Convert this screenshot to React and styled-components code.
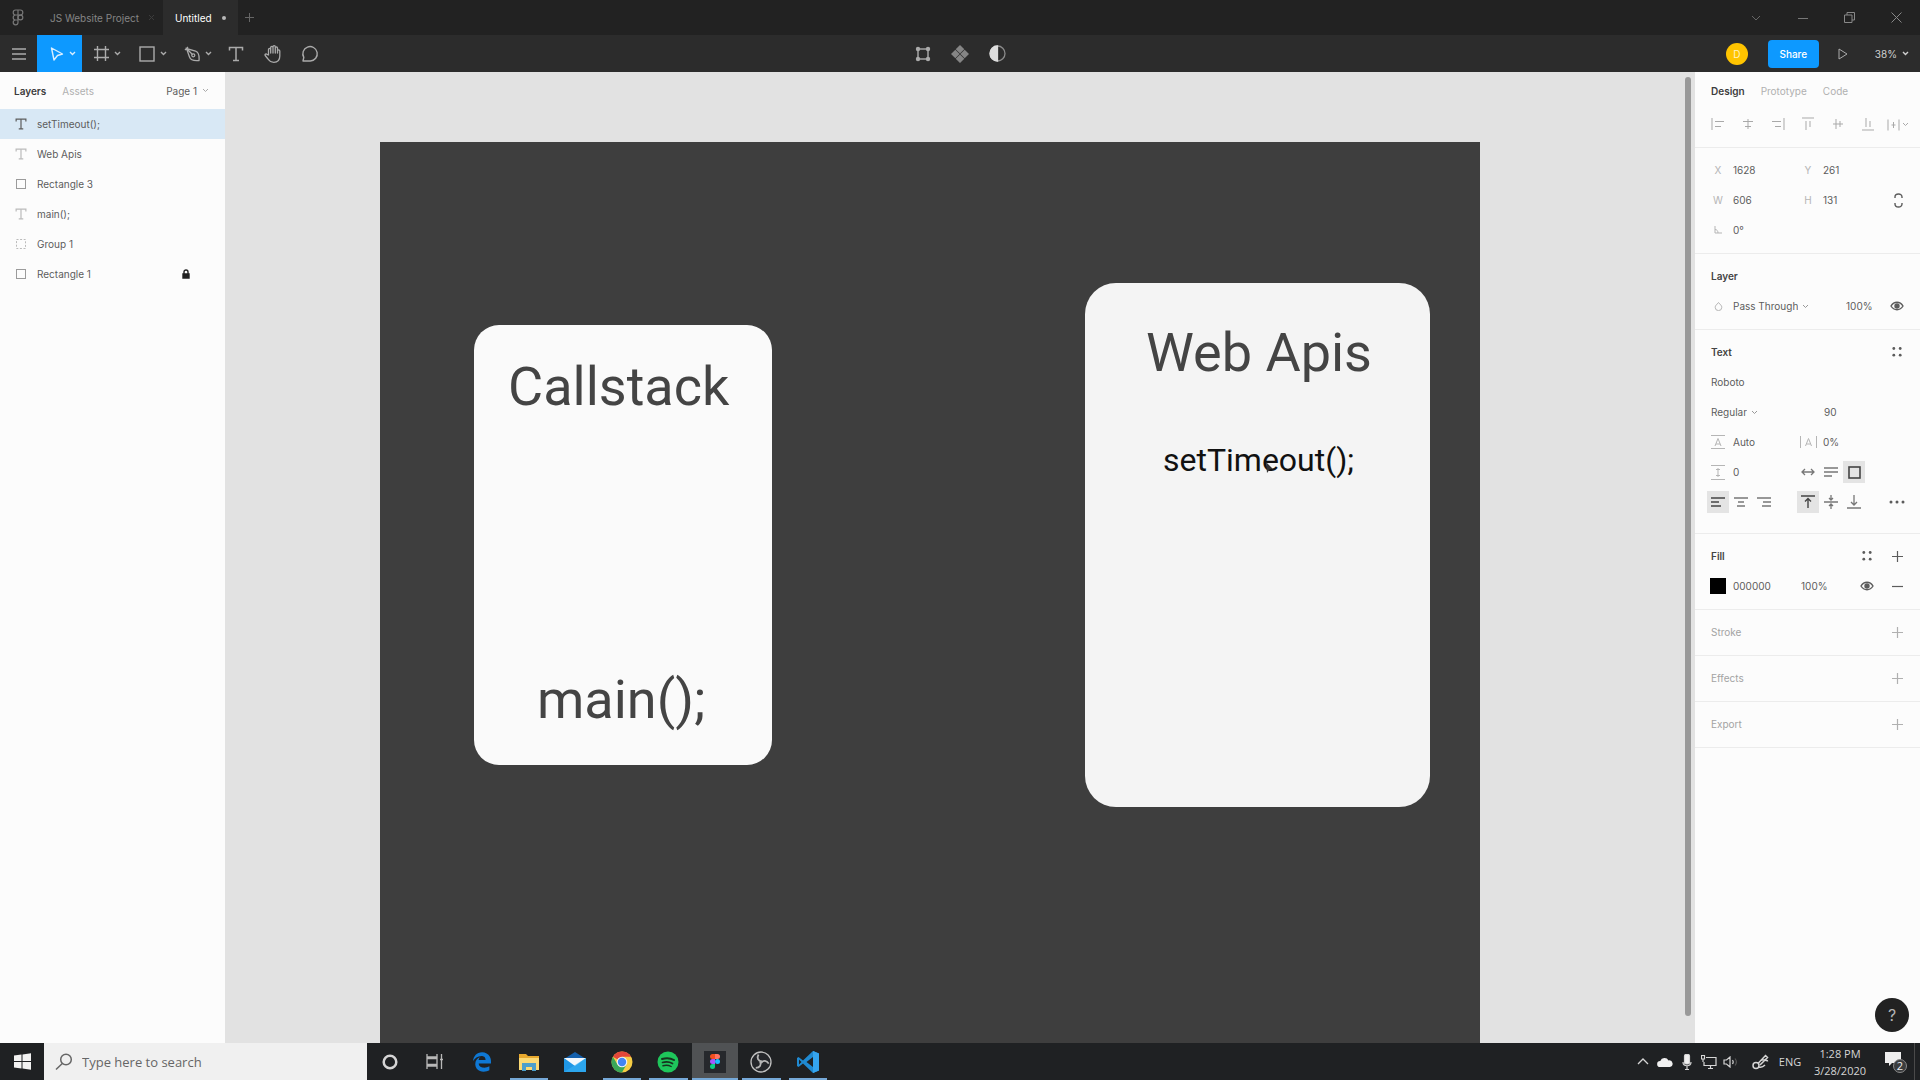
import React from "react";
import styled, { createGlobalStyle, css } from "styled-components";
import { FaEdgeLegacy } from "react-icons/fa";

const ui = `Inter, "Open Sans", sans-serif`;
const system = `"Open Sans", "Noto Sans", sans-serif`;

const Global = createGlobalStyle`
  * { box-sizing: border-box; }
  body { margin: 0; background: #e2e2e2; }
  button, input, select { font: inherit; color: inherit; margin: 0; }
  svg { display: block; flex: none; }
`;

const bare = css`
  border: 0;
  padding: 0;
  background: none;
  display: flex;
  align-items: center;
  justify-content: center;
`;

const Screen = styled.div`
  height: 100vh;
  display: flex;
  flex-direction: column;
  overflow: hidden;
  font: 400 10px/16px ${ui};
  color: #5c5c5c;
`;

/* ---------- title bar ---------- */
const TitleBar = styled.header`
  display: flex;
  height: 35px;
  flex: none;
  background: #222;
  color: #8a8a8a;
`;
const HomeButton = styled.button`
  ${bare}
  width: 36px;
`;
const FileTab = styled.button`
  ${bare}
  gap: 10px;
  padding: 0 ${(p) => (p.$active ? 12 : 9)}px 0 ${(p) => (p.$active ? 12 : 14)}px;
  background: ${(p) => (p.$active ? "#2c2c2c" : "transparent")};
  color: ${(p) => (p.$active ? "#fff" : "#858585")};
`;
const NewTab = styled.button`
  ${bare}
  width: 24px;
`;
const WindowButtons = styled.div`
  display: flex;
  margin-left: auto;
`;
const WindowButton = styled.button`
  ${bare}
  width: 47px;
`;

/* ---------- toolbar ---------- */
const Toolbar = styled.div`
  display: grid;
  grid-template-columns: 1fr auto 1fr;
  height: 37px;
  flex: none;
  background: #2c2c2c;
  color: #ababab;
`;
const ToolGroup = styled.div`
  display: flex;
  justify-content: ${(p) => (p.$end ? "flex-end" : "flex-start")};
  align-items: ${(p) => (p.$end ? "center" : "stretch")};
`;
const Tool = styled.button`
  ${bare}
  width: ${(p) => (p.$menu ? 45 : 37)}px;
  gap: 5px;
  padding-left: ${(p) => (p.$menu ? 6 : 0)}px;
  background: ${(p) => (p.$active ? "#0d99ff" : "transparent")};
  color: ${(p) => (p.$active ? "#d9eeff" : "inherit")};
`;
const Avatar = styled.button`
  ${bare}
  width: 22px;
  height: 22px;
  border-radius: 50%;
  background: #ffc400;
  color: #fff3c4;
  margin-right: 20px;
`;
const Share = styled.button`
  ${bare}
  width: 51px;
  height: 28px;
  border-radius: 4px;
  background: #0d99ff;
  color: #fff;
  font-weight: 500;
`;
const Play = styled.button`
  ${bare}
  width: 56px;
  height: 28px;
  padding-right: 8px;
`;
const ZoomButton = styled.button`
  ${bare}
  gap: 5px;
  margin-right: 11px;
  color: #d0d0d0;
`;

/* ---------- workspace ---------- */
const Workspace = styled.main`
  display: flex;
  flex: 1;
  min-height: 0;
`;
const LeftPanel = styled.aside`
  width: 225px;
  flex: none;
  background: #fcfcfc;
`;
const PanelTabs = styled.div`
  display: flex;
  align-items: center;
  height: 37px;
  gap: 16px;
  padding: 0 16px 0 ${(p) => (p.$left ? 14 : 16)}px;
`;
const PanelTab = styled.button`
  ${bare}
  font-weight: ${(p) => (p.$active ? 600 : 400)};
  color: ${(p) => (p.$active ? "#3c3c3c" : "#b0b0b0")};
`;
const PageButton = styled.button`
  ${bare}
  gap: 5px;
  margin-left: auto;
`;
const LayerList = styled.ul`
  list-style: none;
  margin: 0;
  padding: 0;
`;
const LayerRow = styled.li`
  display: flex;
  align-items: center;
  height: 30px;
  padding: 0 35px 0 15px;
  background: ${(p) => (p.$selected ? "#d8e8f5" : "transparent")};
`;
const LayerName = styled.button`
  ${bare}
  gap: 10px;
  flex: 1;
  justify-content: flex-start;
  & > svg { opacity: ${(p) => p.$dim}; }
`;

const Canvas = styled.section`
  position: relative;
  flex: 1;
  min-width: 0;
  overflow: hidden;
  background: #e2e2e2;
`;
const Artboard = styled.div`
  position: absolute;
  left: 155px;
  top: 70px;
  bottom: 0;
  width: 1100px;
  background: #3e3e3e;
`;
const Shape = styled.div`
  position: absolute;
  left: ${(p) => p.$x}px;
  top: ${(p) => p.$y}px;
  width: ${(p) => p.$w}px;
  height: ${(p) => p.$h}px;
  border-radius: ${(p) => p.$r}px;
  background: ${(p) => p.$fill};
`;
const CanvasText = styled.div`
  position: absolute;
  left: ${(p) => p.$x}px;
  top: ${(p) => p.$y}px;
  font: 400 ${(p) => p.$size}px/64px Roboto, sans-serif;
  color: ${(p) => p.$color};
  white-space: nowrap;
`;
const Pointer = styled.svg`
  position: absolute;
  left: 886px;
  top: 320px;
`;
const Scrollbar = styled.div`
  position: absolute;
  right: 4px;
  top: 5px;
  bottom: 27px;
  width: 6px;
  border-radius: 3px;
  background: #999;
`;

/* ---------- properties ---------- */
const RightPanel = styled.aside`
  position: relative;
  width: 225px;
  flex: none;
  background: #fcfcfc;
`;
const Section = styled.section`
  padding: ${(p) => (p.$first ? 0 : 7)}px 0 ${(p) => (p.$tall ? 16 : 8)}px;
  border-bottom: 1px solid #ececec;
`;
const AlignRow = styled.div`
  display: flex;
  height: 30px;
  padding-left: 8px;
  color: #a9a9a9;
`;
const IconButton = styled.button`
  ${bare}
  width: 30px;
  height: 30px;
  gap: 2px;
  color: ${(p) => p.$color || "inherit"};
`;
const PropRow = styled.div`
  display: grid;
  grid-template-columns: 90px 90px 29px;
  align-items: center;
  height: 30px;
  padding-left: 8px;
`;
const FieldLabel = styled.label`
  display: flex;
  align-items: center;
`;
const FieldMark = styled.span`
  display: flex;
  justify-content: center;
  width: 30px;
  flex: none;
  color: #b5b5b5;
`;
const Value = styled.input`
  width: ${(p) => p.$w || 56}px;
  height: 20px;
  border: 0;
  padding: 0;
  outline: 0;
  background: none;
`;
const TitleRow = styled.div`
  display: flex;
  align-items: center;
  height: 30px;
  padding: 0 8px 0 16px;
`;
const Title = styled.h2`
  flex: 1;
  margin: 0;
  font-size: 10px;
  line-height: 16px;
  font-weight: ${(p) => (p.$empty ? 400 : 600)};
  color: ${(p) => (p.$empty ? "#a3a3a3" : "#444")};
`;
const FlexRow = styled.div`
  display: flex;
  align-items: center;
  height: 30px;
  padding: 0 8px 0 ${(p) => p.$pad || 8}px;
`;
const Select = styled.select`
  appearance: none;
  border: 0;
  padding: 0;
  margin-right: 4px;
  outline: 0;
  background: none;
  field-sizing: content;
`;
const Fixed = styled.div`
  display: flex;
  align-items: center;
  width: ${(p) => p.$w}px;
`;
const Toggles = styled.div`
  display: flex;
  gap: 1px;
`;
const Toggle = styled.button`
  ${bare}
  width: 22px;
  height: 22px;
  background: ${(p) => (p.$on ? "#e4e4e4" : "transparent")};
  color: ${(p) => (p.$on ? "#444" : "#777")};
`;
const Swatch = styled.button`
  width: 16px;
  height: 16px;
  border: 0;
  padding: 0;
  margin-right: 7px;
  background: #000;
`;
const Help = styled.button`
  ${bare}
  position: absolute;
  right: 11px;
  bottom: 11px;
  width: 34px;
  height: 34px;
  border-radius: 50%;
  background: #222;
  color: #b4b4b4;
  font-size: 16px;
`;

/* ---------- taskbar ---------- */
const Taskbar = styled.footer`
  display: flex;
  height: 37px;
  flex: none;
  background: #1f2123;
  color: #d5d5d5;
  font-family: ${system};
`;
const TaskButton = styled.button`
  ${bare}
  width: ${(p) => p.$w || 45}px;
`;
const Search = styled.label`
  display: flex;
  align-items: center;
  gap: 9px;
  width: 323px;
  padding-left: 11px;
  background: #f0f0f0;
  color: #666;
`;
const SearchInput = styled.input`
  flex: 1;
  min-width: 0;
  border: 0;
  padding: 0;
  outline: 0;
  background: none;
  && { font-size: 13px; }
  &::placeholder { color: #666; opacity: 1; }
`;
const Apps = styled.div`
  display: flex;
  width: 372px;
  margin-left: 2px;
`;
const AppButton = styled.button`
  ${bare}
  position: relative;
  flex: 1;
  background: ${(p) => (p.$front ? "#505254" : "transparent")};
  &::after {
    content: "";
    position: absolute;
    left: ${(p) => (p.$front ? 0 : 4)}px;
    right: ${(p) => (p.$front ? 0 : 4)}px;
    bottom: 0;
    height: 2px;
    background: ${(p) => (p.$open ? "#76a9d8" : "transparent")};
  }
`;
const Tray = styled.div`
  display: flex;
  align-items: center;
  margin-left: auto;
`;
const TrayButton = styled.button`
  ${bare}
  width: ${(p) => p.$w || 22}px;
  height: 37px;
  font-size: 11px;
`;
const Clock = styled.button`
  ${bare}
  flex-direction: column;
  width: 76px;
  height: 37px;
  font-size: 11px;
  line-height: 17px;
`;
const ShowDesktop = styled.button`
  ${bare}
  width: 6px;
  height: 37px;
  border-left: 1px solid #4a4a4a;
`;

/* ---------- icons ---------- */
const Ico = ({ w = 16, h, s = 1, children, ...r }) => (
  <svg width={w} height={h || w} viewBox={`0 0 ${w} ${h || w}`} fill="none" stroke="currentColor" strokeWidth={s} aria-hidden="true" {...r}>
    {children}
  </svg>
);
const Chevron = ({ w = 7, ...r }) => (
  <Ico w={w} h={5} {...r}><path d={`M1 1l${w / 2 - 1} 2.5L${w - 1} 1`} /></Ico>
);
const TIcon = ({ w = 12 }) => (
  <Ico w={w} viewBox="0 0 16 16" s={w > 12 ? 1.5 : 1.6}><path d="M1.5 4.5V1.5h13v3M8 1.5v13M5 14.5h6" /></Ico>
);
const SquareIcon = ({ dash }) => (
  <Ico w={12}><rect x="1.5" y="1.5" width="9" height="9" strokeDasharray={dash ? "2 1.6" : "none"} /></Ico>
);
const Eye = () => (
  <Ico w={14} h={10} s={1.4}>
    <path d="M1 5c3-5 9-5 12 0-3 5-9 5-12 0z" />
    <circle cx="7" cy="5" r="2" fill="currentColor" />
  </Ico>
);
const Plus = () => <Ico w={11} s={1.2}><path d="M5.5 0v11M0 5.5h11" /></Ico>;
const Minus = () => <Ico w={11} s={1.2}><path d="M0 5.5h11" /></Ico>;
const Dots4 = () => (
  <Ico w={10} stroke="none" fill="currentColor">
    <circle cx="1.8" cy="1.5" r="1.4" /><circle cx="8.2" cy="1.5" r="1.4" />
    <circle cx="1.8" cy="8.2" r="1.4" /><circle cx="8.2" cy="8.2" r="1.4" />
  </Ico>
);

const aligns = [
  ["Align left", "M1 1v12M4 4.5h9M4 9.5h6"],
  ["Align horizontal centers", "M7 2v10M2 4.5h10M4 9.5h6"],
  ["Align right", "M13 1v12M1 4.5h9M4 9.5h6"],
  ["Align top", "M1 1h12M5 4v9M9 4v6"],
  ["Align vertical centers", "M2 7h10M5 2v10M9 4v6"],
  ["Align bottom", "M1 13h12M5 1v9M9 4v6"],
];

const layers = [
  { name: "setTimeout();", kind: "text", selected: true },
  { name: "Web Apis", kind: "text" },
  { name: "Rectangle 3", kind: "rect" },
  { name: "main();", kind: "text" },
  { name: "Group 1", kind: "group" },
  { name: "Rectangle 1", kind: "rect", locked: true },
];

const Field = ({ mark, label, value }) => (
  <FieldLabel>
    <FieldMark>{mark}</FieldMark>
    <Value aria-label={label} defaultValue={value} />
  </FieldLabel>
);

const FigmaOutline = () => (
  <Ico w={12} h={17} s={1.2} stroke="#777">
    <path d="M6 1H3.7a2.4 2.4 0 000 5H6zM6 1h2.3a2.4 2.4 0 010 5H6zM6 6H3.7a2.4 2.4 0 000 5H6zM6 11H3.7A2.4 2.4 0 106 13.5z" />
    <circle cx="8.4" cy="8.5" r="2.4" />
  </Ico>
);

/* taskbar application marks */
const Explorer = () => (
  <svg width="22" height="20" viewBox="0 0 22 20" aria-hidden="true">
    <path d="M1 2h7l2 2h11v14H1z" fill="#e8a92e" />
    <path d="M1 6h20v12H1z" fill="#fbd974" />
    <path d="M4 11h14v8h-4v-4H8v4H4z" fill="#4d9fcb" />
  </svg>
);
const Mail = () => (
  <svg width="24" height="22" viewBox="0 0 24 22" aria-hidden="true">
    <path d="M1 8L12 1l11 7z" fill="#1560ac" />
    <path d="M1 7h22v14H1z" fill="#1f97e6" />
    <path d="M1 7h22L12 15z" fill="#f4f8fc" />
    <path d="M1 21l22-14v14z" fill="#36b0f4" opacity=".6" />
  </svg>
);
const Chrome = () => (
  <svg width="22" height="22" viewBox="0 0 22 22" aria-hidden="true">
    <circle cx="11" cy="11" r="10.5" fill="#f6cd45" />
    <path d="M11 11L1.9 5.75A10.5 10.5 0 0120.1 5.75H11z" fill="#e2473a" />
    <path d="M1.9 5.75A10.5 10.5 0 0011 21.5l4.5-8L6.5 13.5z" fill="#3aa757" />
    <circle cx="11" cy="11" r="5.3" fill="#f5f5f5" />
    <circle cx="11" cy="11" r="4.2" fill="#4285f4" />
  </svg>
);
const Spotify = () => (
  <svg width="22" height="22" viewBox="0 0 22 22" fill="none" stroke="#17321f" strokeLinecap="round" aria-hidden="true">
    <circle cx="11" cy="11" r="10.5" fill="#1ec65b" stroke="none" />
    <path d="M5 8c4-1.3 8.5-1 12 1" strokeWidth="2" />
    <path d="M5.5 11.5c3.5-1 7-.7 10 1" strokeWidth="1.7" />
    <path d="M6 14.7c3-.8 5.7-.5 8.2.8" strokeWidth="1.4" />
  </svg>
);
const FigmaApp = () => (
  <svg width="22" height="22" viewBox="0 0 22 22" aria-hidden="true">
    <rect width="22" height="22" fill="#26282c" />
    <path d="M11 3H8.5a2.5 2.5 0 000 5H11z" fill="#f24e1e" />
    <path d="M11 3h2.5a2.5 2.5 0 010 5H11z" fill="#ff7262" />
    <path d="M11 8H8.5a2.5 2.5 0 000 5H11z" fill="#a259ff" />
    <circle cx="13.5" cy="10.5" r="2.5" fill="#1abcfe" />
    <path d="M11 13H8.5a2.5 2.5 0 102.5 2.5z" fill="#0acf83" />
  </svg>
);
const Obs = () => (
  <svg width="22" height="22" viewBox="0 0 22 22" fill="none" aria-hidden="true">
    <circle cx="11" cy="11" r="10" fill="#24262a" stroke="#c2c2c2" strokeWidth="1.3" />
    <g stroke="#b5b5b5" strokeWidth="1.8">
      <path d="M12 10.5C8 10 6.5 7 8.5 3.5" />
      <path d="M12 10.5C8 10 6.5 7 8.5 3.5" transform="rotate(120 11 11)" />
      <path d="M12 10.5C8 10 6.5 7 8.5 3.5" transform="rotate(240 11 11)" />
    </g>
  </svg>
);
const VsCode = () => (
  <svg width="24" height="22" viewBox="0 0 24 22" aria-hidden="true">
    <path d="M17 0l6 2.5v17L17 22 7 12.5 2.5 16 1 15V7l1.5-1L7 9.5z" fill="#1f8ad2" />
    <path d="M17 6v10l-6.5-5zM3 8.5v5L5.5 11z" fill="#1f2123" />
    <path d="M17 0l6 2.5v17L17 22z" fill="#35a4ee" />
  </svg>
);

const apps = [
  { name: "Edge", icon: <FaEdgeLegacy size={20} color="#0f78d4" /> },
  { name: "File Explorer", icon: <Explorer />, open: true },
  { name: "Mail", icon: <Mail /> },
  { name: "Chrome", icon: <Chrome />, open: true },
  { name: "Spotify", icon: <Spotify />, open: true },
  { name: "Figma", icon: <FigmaApp />, open: true, front: true },
  { name: "OBS Studio", icon: <Obs />, open: true },
  { name: "Visual Studio Code", icon: <VsCode />, open: true },
];

export default function App() {
  return (
    <Screen>
      <Global />
      <TitleBar>
        <HomeButton aria-label="Home"><FigmaOutline /></HomeButton>
        <FileTab>
          JS Website Project
          <Ico w={5} stroke="#3c3c3c"><path d="M0 0l5 5M5 0L0 5" /></Ico>
        </FileTab>
        <FileTab $active>
          Untitled
          <Ico w={4} stroke="none" fill="#b8b8b8"><circle cx="2" cy="2" r="2" /></Ico>
        </FileTab>
        <NewTab aria-label="New tab"><Ico w={9} stroke="#666"><path d="M4.5 0v9M0 4.5h9" /></Ico></NewTab>
        <WindowButtons>
          <WindowButton aria-label="Tab list"><Ico w={10} h={6} stroke="#666"><path d="M1 1l4 4 4-4" /></Ico></WindowButton>
          <WindowButton aria-label="Minimize"><Ico w={10} stroke="#777"><path d="M0 5.5h10" /></Ico></WindowButton>
          <WindowButton aria-label="Restore"><Ico w={11} stroke="#888"><path d="M3 3V.5h7.5V8H8M.5 3H8v7.5H.5z" /></Ico></WindowButton>
          <WindowButton aria-label="Close"><Ico w={11} stroke="#888"><path d="M.5.5l10 10M10.5.5l-10 10" /></Ico></WindowButton>
        </WindowButtons>
      </TitleBar>

      <Toolbar>
        <ToolGroup>
          <Tool aria-label="Main menu"><Ico w={14} h={12} s={1.5}><path d="M0 1h14M0 6h14M0 11h14" /></Ico></Tool>
          <Tool $menu $active aria-label="Move">
            <Ico w={14} s={1.4}><path d="M1.5 1l11 6-5 1.5L4 13z" strokeLinejoin="round" /></Ico><Chevron s={1.4} />
          </Tool>
          <Tool $menu aria-label="Frame">
            <Ico w={15} s={1.4}><path d="M3.5 0v15M11.5 0v15M0 3.5h15M0 11.5h15" /></Ico><Chevron s={1.4} />
          </Tool>
          <Tool $menu aria-label="Rectangle">
            <Ico w={16} s={1.4}><rect x="1" y="1" width="14" height="14" /></Ico><Chevron s={1.4} />
          </Tool>
          <Tool $menu aria-label="Pen">
            <Ico w={16} s={1.3}>
              <path d="M1 4l3-3M2.5 2.5l3 8.5c1 3 4 4 9.5 3.5.5-5.5-1-8.5-3.5-9.5zM3 3l5.5 5.5" />
              <circle cx="9.3" cy="9.3" r="1.5" />
            </Ico><Chevron s={1.4} />
          </Tool>
          <Tool aria-label="Text"><TIcon w={16} /></Tool>
          <Tool aria-label="Hand">
            <Ico w={18} s={1.3}>
              <path d="M4.5 10V4.5a1.1 1.1 0 012.2 0V8 2.5a1.1 1.1 0 012.3 0V8 1.8a1.1 1.1 0 012.3 0V8 3a1.1 1.1 0 012.2 0v5 -2a1.1 1.1 0 012.3 0v5c0 4-2.5 6.3-6 6.3-3 0-4.5-1.3-5.8-3.3L1.2 10.5c-.6-1.3.8-2 1.8-1.2z" strokeLinejoin="round" />
            </Ico>
          </Tool>
          <Tool aria-label="Comment">
            <Ico w={18} s={1.4}><path d="M2 16l.8-3.6A7.2 7.2 0 119.3 16z" strokeLinejoin="round" /></Ico>
          </Tool>
        </ToolGroup>
        <ToolGroup>
          <Tool aria-label="Edit object">
            <Ico w={16} s={1.4}>
              <rect x="3" y="3" width="10" height="10" />
              <g fill="currentColor" stroke="none"><circle cx="3" cy="3" r="2.2" /><circle cx="13" cy="3" r="2.2" /><circle cx="3" cy="13" r="2.2" /><circle cx="13" cy="13" r="2.2" /></g>
            </Ico>
          </Tool>
          <Tool aria-label="Create component">
            <Ico w={18} stroke="none" fill="#858585"><path d="M9 0l4.3 4.3L9 8.6 4.7 4.3zM9 9.4l4.3 4.3L9 18l-4.3-4.3zM4.3 4.7L8.6 9l-4.3 4.3L0 9zM13.7 4.7L18 9l-4.3 4.3L9.4 9z" /></Ico>
          </Tool>
          <Tool aria-label="Use as mask">
            <Ico w={17} s={1.3} stroke="#8b8b8b"><circle cx="8.5" cy="8.5" r="7.5" /><path d="M8.5 1a7.5 7.5 0 000 15z" fill="#dedede" stroke="#dedede" /></Ico>
          </Tool>
        </ToolGroup>
        <ToolGroup $end>
          <Avatar>D</Avatar>
          <Share>Share</Share>
          <Play aria-label="Present"><Ico w={10} h={12}><path d="M1 1l8 5-8 5z" strokeLinejoin="round" /></Ico></Play>
          <ZoomButton>38% <Chevron s={1.4} /></ZoomButton>
        </ToolGroup>
      </Toolbar>

      <Workspace>
        <LeftPanel>
          <PanelTabs $left>
            <PanelTab $active>Layers</PanelTab>
            <PanelTab>Assets</PanelTab>
            <PageButton>Page 1 <Chevron stroke="#aaa" /></PageButton>
          </PanelTabs>
          <LayerList>
            {layers.map((l) => (
              <LayerRow key={l.name} $selected={l.selected}>
                <LayerName $dim={l.selected ? 1 : l.kind === "rect" ? 0.6 : 0.4}>
                  {l.kind === "text" ? <TIcon /> : <SquareIcon dash={l.kind === "group"} />}
                  {l.name}
                </LayerName>
                {l.locked && (
                  <Ico w={8} h={10} s={1.4} stroke="#222"><path d="M2 5V3a2 2 0 014 0v2" /><path d="M1 5h6v4H1z" fill="#222" /></Ico>
                )}
              </LayerRow>
            ))}
          </LayerList>
        </LeftPanel>

        <Canvas>
          <Artboard>
            <Shape $x={94} $y={183} $w={298} $h={440} $r={25} $fill="#fafafa" />
            <CanvasText $x={128} $y={213} $size={54} $color="#444">Callstack</CanvasText>
            <CanvasText $x={157} $y={526} $size={54} $color="#444">main();</CanvasText>
            <Shape $x={705} $y={141} $w={345} $h={524} $r={31} $fill="#f4f4f4" />
            <CanvasText $x={766} $y={179} $size={54} $color="#444">Web Apis</CanvasText>
            <CanvasText $x={783} $y={286} $size={32} $color="#111">setTimeout();</CanvasText>
            <Pointer width="8" height="12" viewBox="0 0 8 12" aria-hidden="true"><path d="M0 0l7 7H4l-3 4z" fill="#333" /></Pointer>
          </Artboard>
          <Scrollbar />
        </Canvas>

        <RightPanel>
          <Section $first>
            <PanelTabs>
              <PanelTab $active>Design</PanelTab>
              <PanelTab>Prototype</PanelTab>
              <PanelTab>Code</PanelTab>
            </PanelTabs>
            <AlignRow>
              {aligns.map(([name, d]) => (
                <IconButton key={name} aria-label={name}><Ico w={14}><path d={d} /></Ico></IconButton>
              ))}
              <IconButton aria-label="Distribute">
                <Ico w={13}><path d="M1 1.5v11M12 1.5v11M6.5 4v6M4.5 7h4" /></Ico><Chevron />
              </IconButton>
            </AlignRow>
          </Section>

          <Section>
            <PropRow><Field mark="X" label="X" value="1628" /><Field mark="Y" label="Y" value="261" /></PropRow>
            <PropRow>
              <Field mark="W" label="Width" value="606" />
              <Field mark="H" label="Height" value="131" />
              <IconButton aria-label="Constrain proportions">
                <Ico w={9} h={15} s={1.4}><path d="M1 5V4a3.5 3 0 017 0v1M1 10v1a3.5 3 0 007 0v-1" /></Ico>
              </IconButton>
            </PropRow>
            <PropRow>
              <Field mark={<Ico w={8}><path d="M1 0v7h7M1 3.5c2 0 3 1.5 3 3.5" /></Ico>} label="Rotation" value="0°" />
            </PropRow>
          </Section>

          <Section>
            <TitleRow><Title>Layer</Title></TitleRow>
            <FlexRow>
              <FieldMark><Ico w={9}><path d="M4.5.5c2 2.5 3.3 3 3.3 4.8a3.2 3.2 0 01-6.6 0C1.2 3.5 2.5 3 4.5.5z" /></Ico></FieldMark>
              <Fixed $w={113}>
                <Select aria-label="Blend mode"><option>Pass Through</option></Select><Chevron stroke="#999" />
              </Fixed>
              <Value $w={36} aria-label="Layer opacity" defaultValue="100%" />
              <IconButton aria-label="Toggle visibility"><Eye /></IconButton>
            </FlexRow>
          </Section>

          <Section $tall>
            <TitleRow><Title>Text</Title><IconButton aria-label="Text styles"><Dots4 /></IconButton></TitleRow>
            <FlexRow $pad={16}><Value $w={120} aria-label="Font family" defaultValue="Roboto" /></FlexRow>
            <FlexRow $pad={16}>
              <Fixed $w={113}><Select aria-label="Font weight"><option>Regular</option></Select><Chevron stroke="#999" /></Fixed>
              <Value aria-label="Font size" defaultValue="90" />
            </FlexRow>
            <PropRow>
              <Field mark={<Ico w={14}><path d="M0 .5h14M0 13.5h14M4 11l3-7.5 3 7.5M5 9h4" /></Ico>} label="Line height" value="Auto" />
              <Field mark={<Ico w={17} h={12}><path d="M.5 0v12M16.5 0v12M5.5 10l3-7.5 3 7.5M6.5 8h4" /></Ico>} label="Letter spacing" value="0%" />
            </PropRow>
            <FlexRow>
              <Fixed $w={94}>
                <Field mark={<Ico w={14} h={15}><path d="M0 .5h14M0 14.5h14M7 3v9M5 4.5h4M5 10.5h4" /></Ico>} label="Paragraph spacing" value="0" />
              </Fixed>
              <Toggles>
                <Toggle aria-label="Auto width"><Ico w={14} h={8} s={1.3}><path d="M1 4h12M4 1L1 4l3 3M10 1l3 3-3 3" /></Ico></Toggle>
                <Toggle aria-label="Auto height"><Ico w={14} h={10} s={1.3}><path d="M0 1h14M0 5h14M0 9h8" /></Ico></Toggle>
                <Toggle $on aria-label="Fixed size"><Ico w={13} s={1.6}><rect x="1" y="1" width="11" height="11" /></Ico></Toggle>
              </Toggles>
            </FlexRow>
            <FlexRow $pad={12}>
              <Fixed $w={90}>
                <Toggles>
                  <Toggle $on aria-label="Text align left"><Ico w={14} h={10} s={1.3}><path d="M0 1h14M0 5h8M0 9h10" /></Ico></Toggle>
                  <Toggle aria-label="Text align center"><Ico w={14} h={10} s={1.3}><path d="M0 1h14M4 5h6M3 9h8" /></Ico></Toggle>
                  <Toggle aria-label="Text align right"><Ico w={14} h={10} s={1.3}><path d="M0 1h14M6 5h8M5 9h9" /></Ico></Toggle>
                </Toggles>
              </Fixed>
              <Fixed $w={85}>
                <Toggles>
                  <Toggle $on aria-label="Vertical align top"><Ico w={14} s={1.4}><path d="M0 1h14M7 13V3.5M4 6.5l3-3 3 3" /></Ico></Toggle>
                  <Toggle aria-label="Vertical align middle"><Ico w={14} s={1.3}><path d="M0 7h14M7 0v5M7 14V9M5 3l2 2 2-2M5 11l2-2 2 2" /></Ico></Toggle>
                  <Toggle aria-label="Vertical align bottom"><Ico w={14} s={1.3}><path d="M0 13h14M7 0v10M4 7l3 3 3-3" /></Ico></Toggle>
                </Toggles>
              </Fixed>
              <IconButton aria-label="More text options">
                <Ico w={16} h={4} stroke="none" fill="currentColor"><circle cx="2" cy="2" r="1.5" /><circle cx="8" cy="2" r="1.5" /><circle cx="14" cy="2" r="1.5" /></Ico>
              </IconButton>
            </FlexRow>
          </Section>

          <Section>
            <TitleRow>
              <Title>Fill</Title>
              <IconButton aria-label="Fill styles"><Dots4 /></IconButton>
              <IconButton aria-label="Add fill"><Plus /></IconButton>
            </TitleRow>
            <FlexRow $pad={15}>
              <Swatch aria-label="Fill color" />
              <Value $w={68} aria-label="Fill hex" defaultValue="000000" />
              <Value $w={51} aria-label="Fill opacity" defaultValue="100%" />
              <IconButton aria-label="Toggle fill"><Eye /></IconButton>
              <IconButton aria-label="Remove fill"><Minus /></IconButton>
            </FlexRow>
          </Section>

          {["Stroke", "Effects", "Export"].map((name) => (
            <Section key={name}>
              <TitleRow>
                <Title $empty>{name}</Title>
                <IconButton $color="#b0b0b0" aria-label={`Add ${name}`}><Plus /></IconButton>
              </TitleRow>
            </Section>
          ))}
          <Help aria-label="Help">?</Help>
        </RightPanel>
      </Workspace>

      <Taskbar>
        <TaskButton $w={44} aria-label="Start">
          <Ico w={17} stroke="none" fill="#f2f2f2"><path d="M0 2.5l7.5-1V8H0zM8.5 1.4L17 .3V8H8.5zM0 9h7.5v6.5l-7.5-1zM8.5 9H17v7.7l-8.5-1.1z" /></Ico>
        </TaskButton>
        <Search>
          <Ico w={18} s={1.5}><circle cx="11" cy="6.5" r="5.3" /><path d="M7.3 10.5L1 16.5" /></Ico>
          <SearchInput aria-label="Search" placeholder="Type here to search" />
        </Search>
        <TaskButton aria-label="Cortana"><Ico w={16} s={2.5}><circle cx="8" cy="8" r="6.3" /></Ico></TaskButton>
        <TaskButton aria-label="Task view">
          <Ico w={17} h={15} s={1.3} stroke="#b8b8b8"><path d="M1 0v3h10V0M1 15v-3h10v3M1 4.5h10v6H1zM15.5 0v15M14 5.5h3" /></Ico>
        </TaskButton>
        <Apps>
          {apps.map((a) => (
            <AppButton key={a.name} aria-label={a.name} $open={a.open} $front={a.front}>{a.icon}</AppButton>
          ))}
        </Apps>
        <Tray>
          <TrayButton aria-label="Show hidden icons"><Ico w={12} h={7} s={1.3}><path d="M1 6l5-5 5 5" /></Ico></TrayButton>
          <TrayButton aria-label="OneDrive"><Ico w={16} h={10} stroke="none" fill="#f0f0f0"><path d="M3 10a3 3 0 01.3-6A4.5 4.5 0 0111.5 3.5 3.3 3.3 0 0113 10z" /></Ico></TrayButton>
          <TrayButton aria-label="Microphone"><Ico w={10} h={16} s={1.2}><rect x="2.5" y=".5" width="5" height="9.5" rx="1.5" fill="#f0f0f0" /><path d="M1 8c0 5 8 5 8 0M5 12v3.5M3 15.5h4" /></Ico></TrayButton>
          <TrayButton aria-label="Network"><Ico w={16} h={14} s={1.2}><path d="M5 2.5h10v8H3V7M7 13.5h5M9.5 10.5v3M.5.5h3V4h-3zM2 4v3" /></Ico></TrayButton>
          <TrayButton aria-label="Volume"><Ico w={16} h={12} s={1.2}><path d="M1 4h2.5L7 1v10L3.5 8H1zM9.5 4c1 1.5 1 2.5 0 4" /><path d="M12 2.5c2 2.5 2 4.5 0 7" stroke="#555" /></Ico></TrayButton>
          <TrayButton $w={36} aria-label="Windows Ink"><Ico w={17} h={16} s={1.5}><circle cx="4" cy="11.5" r="3" /><path d="M6 9.5L13.5 1.5l2 2L8 11M9 6.5c3-2 5 1 7 0M7 13c3 1 5-1 6-2" /></Ico></TrayButton>
          <TrayButton $w={24}>ENG</TrayButton>
          <Clock><span>1:28 PM</span><span>3/28/2020</span></Clock>
          <TrayButton $w={36} aria-label="2 notifications">
            <svg width="24" height="24" viewBox="0 0 24 24" aria-hidden="true">
              <path d="M1 2h16v11h-9l-3 3v-3H1z" fill="#eee" />
              <circle cx="16" cy="16" r="6.5" fill="#3a3c3e" stroke="#8a8a8a" />
              <text x="16" y="20" textAnchor="middle" fontFamily="Open Sans, sans-serif" fontSize="11" fill="#eee">2</text>
            </svg>
          </TrayButton>
          <ShowDesktop aria-label="Show desktop" />
        </Tray>
      </Taskbar>
    </Screen>
  );
}
